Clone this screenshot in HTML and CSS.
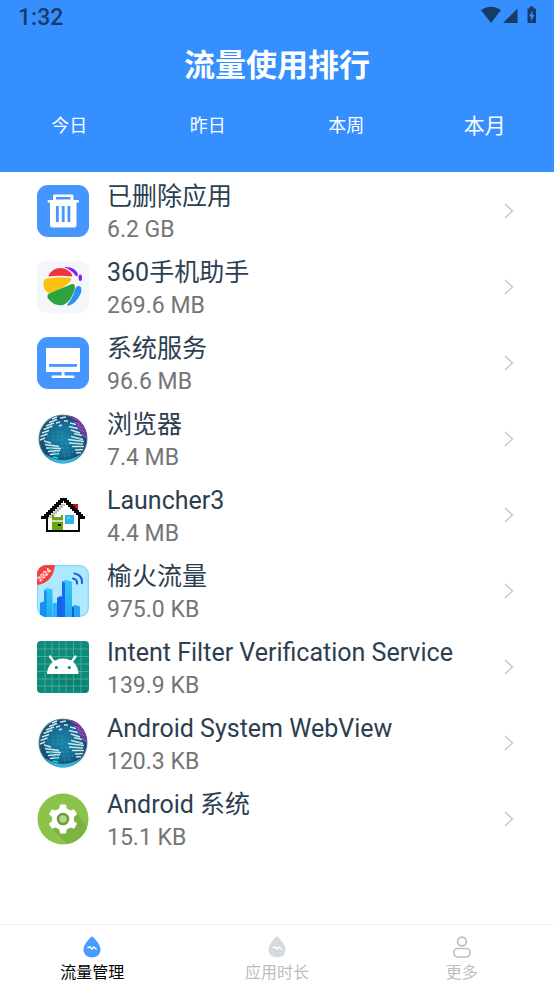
FILE: index.html
```html
<!DOCTYPE html>
<html lang="zh-CN">
<head>
<meta charset="UTF-8" />
<meta name="viewport" content="width=device-width, initial-scale=1" />
<title>流量使用排行</title>
<link rel="stylesheet" href="styles.css">
</head>
<body>

<!-- shared icons -->
<svg class="defs" width="0" height="0" aria-hidden="true">
  <defs>
    <radialGradient id="ocean" cx="50%" cy="50%" r="50%">
      <stop offset="0" stop-color="#1a86aa"/>
      <stop offset="0.65" stop-color="#166c93"/>
      <stop offset="0.92" stop-color="#14496d"/>
      <stop offset="1" stop-color="#6fa3b8"/>
    </radialGradient>
    <linearGradient id="tower" x1="0" y1="0" x2="0" y2="1">
      <stop offset="0" stop-color="#35c5fa"/>
      <stop offset="1" stop-color="#22aaf5"/>
    </linearGradient>
    <clipPath id="round"><rect width="52" height="52" rx="9"/></clipPath>
    <clipPath id="disc"><circle cx="26" cy="26" r="25.500"/></clipPath>
  </defs>
  <symbol id="chevron" viewBox="0 0 10 16">
    <path d="M1 1l7.500 7L1 15" fill="none" stroke="#c4c4c4" stroke-width="1.300"/>
  </symbol>
  <symbol id="globe" viewBox="0 0 52 52">
    <circle cx="26" cy="26" r="24.600" fill="url(#ocean)"/>
    <path d="M8 41Q26 53 44 41Q36 50.500 26 50.500Q16 50.500 8 41Z" fill="#36b4dc"/>
    <path d="M15 23h14M15 27h12M24 31h7M25 35h8M26 39h10M27 43h8M20 19h9" stroke="#3aa3c0" stroke-width="0.800" stroke-dasharray="2 2.500" fill="none"/>
    <g fill="none" stroke="#cfe6ec" stroke-width="1.400">
      <path d="M15 6l5-2M12 9.500l8-3M9 13l8-3M6.500 16.500l9-3.500M5 20l7-2.500M3.500 23.500l7-2.500M3 27l5-2M19 10l4-1M23 5l6-1M27 8l4 0M22 13l3-1"/>
      <path d="M7 28l7 2M8 31.500l14 2M9 35l15 .5M11 38.500l12-1M13 41.500l9-1"/>
      <path d="M33 10l6 1.500M32 13.500l9 2M34 17l9 3M37 20.500l8 2M34 23.500l12 3M31 26.500l16 2M32 30l14 1M35 33.500l12 0M38 37l8-.5M39 40l5-.5"/>
    </g>
    <path d="M16 40l5 1M16 44l5 1M12 35l4 1" stroke="#35d4c8" stroke-width="1.400"/>
    <path d="M35 4.500l6 3M37 9l7 2.500M40 12l7 4M42 16l7 4M45 21l4 3" stroke="#b23cc8" stroke-width="1.800" fill="none"/>
    <path d="M34 3.200Q47 8 49.700 23" stroke="#7d3ba8" stroke-width="1.200" fill="none"/>
  </symbol>
  <symbol id="drop" viewBox="0 0 18 22">
    <path d="M9 0.500C10 0.500 17.500 8 17.500 13.500C17.500 18.500 13.700 21.500 9 21.500S0.500 18.500 0.500 13.500C0.500 8 8 0.500 9 0.500Z" fill="currentColor"/>
    <path d="M5 11.500l2 -.5 1.800 2 2 -2 2.400 2" fill="none" stroke="#fff" stroke-width="1.500" stroke-linecap="round" stroke-linejoin="round"/>
  </symbol>
</svg>

<header>
  <div class="status">
    <span>1:32</span>
    <svg width="56" height="20" viewBox="0 0 56 20" fill="#173b69" aria-hidden="true">
      <path d="M0 4Q10 -2.500 20 4L10 17Z"/>
      <path d="M22 17L36.500 2.500V17Z"/>
      <path d="M46.500 2.500h2V0.500h4v2h2.500v14.500h-8.500Z"/>
      <path d="M51.500 4.500l-3.500 6h2v4.500l3.500-6h-2Z" fill="#368fff"/>
    </svg>
  </div>
  <h1>流量使用排行</h1>
  <div class="tabs">
    <button type="button">今日</button>
    <button type="button">昨日</button>
    <button type="button">本周</button>
    <button type="button" class="active">本月</button>
  </div>
</header>

<main>
  <a class="row" href="#">
    <svg class="icon" viewBox="0 0 52 52">
      <rect width="52" height="52" rx="11" fill="#4596ff"/>
      <path d="M16 15V11q0-1.500 1.500-1.500h17.500q1.500 0 1.500 1.500v4h4.500q1 0 1 1.300t-1 1.300h-1.500V40q0 2.500-2.500 2.500H15.500Q13 42.500 13 40V17.600h-1.500q-1 0-1-1.300t1-1.300Z" fill="#fff"/>
      <path d="M19 12h14.500v2.500H19ZM19 21h2.800v16H19ZM24.800 21h2.800v16h-2.800ZM30.500 21h2.800v16h-2.800Z" fill="#4596ff"/>
    </svg>
    <div class="info"><h2>已删除应用</h2><p>6.2 GB</p></div>
    <svg class="arrow"><use href="#chevron"/></svg>
  </a>
  <a class="row" href="#">
    <svg class="icon" viewBox="0 0 52 52">
      <rect width="52" height="52" rx="9" fill="#f3f6fb"/>
      <path d="M11.300 15.500C14 7.500 24 4.500 31 9.500C34 11.500 36 14 35 15.500Q23 14 11.300 15.500Z" fill="#f0343c"/>
      <path d="M8 18Q20 15 33 17Q36 18 32 22Q24 29 12 32Q9 31.500 7 27Q5.500 21 8 18Z" fill="#fcc010"/>
      <path d="M12 32.500L35 23Q39 22 37.500 29Q34 41 26 44Q17 45.500 11 37.500Q9.500 34 12 32.500Z" fill="#2ca33c"/>
      <path d="M41 25Q45.500 24 44 32Q39 43 31 45Q29 44.500 33 40Q37 34 38 28Q39 25.500 41 25Z" fill="#2c90f4"/>
      <path d="M27 6Q39 5.500 41 14Q40.500 16 38.500 14.500Q34 8.500 27 6Z" fill="#8b1ff0"/>
      <ellipse cx="43.300" cy="16.800" rx="1.700" ry="3.300" fill="#8b1ff0"/>
    </svg>
    <div class="info"><h2>360手机助手</h2><p>269.6 MB</p></div>
    <svg class="arrow"><use href="#chevron"/></svg>
  </a>
  <a class="row" href="#">
    <svg class="icon" viewBox="0 0 52 52">
      <rect width="52" height="52" rx="11" fill="#4596ff"/>
      <rect x="9" y="11" width="34" height="24" rx="1" fill="#fff"/>
      <path d="M12 27h28v2.800H12Z" fill="#4596ff"/>
      <path d="M24.700 35h2.800v3.500h9q1 0 1 1.300t-1 1.300h-21q-1 0-1-1.300t1-1.300h9.200Z" fill="#fff"/>
    </svg>
    <div class="info"><h2>系统服务</h2><p>96.6 MB</p></div>
    <svg class="arrow"><use href="#chevron"/></svg>
  </a>
  <a class="row" href="#">
    <svg class="icon"><use href="#globe"/></svg>
    <div class="info"><h2>浏览器</h2><p>7.4 MB</p></div>
    <svg class="arrow"><use href="#chevron"/></svg>
  </a>
  <a class="row" href="#">
    <svg class="icon" viewBox="0 0 52 52" shape-rendering="crispEdges">
      <path d="M36 15h5v9h-5Z" fill="#d80f12"/>
      <path d="M9 28L26 11L43 28V42H9Z" fill="#fff"/>
      <path d="M11 29v-2h2v-2h2v-2h2v-2h2v-2h2v-2h2v-2h5v2h-2v2h-2v2h-2v2h-2v2h-2v2h-2v2h-4v2Z" fill="#c4c4c4"/>
      <path d="M15 26h2v2h7v-2h2v15H15Z" fill="#6aa70b"/>
      <path d="M15 31h11v2H15Z" fill="#d1d8c5"/>
      <path d="M21 35h3v2h-3Z" fill="#111"/>
      <path d="M28 26h9v9h-9Z" fill="#2fb4e4"/>
      <path d="M30 28h3v2h-3Z" fill="#6dccee"/>
      <path d="M4 28h4v-2h2v-2h2v-2h2v-2h2v-2h2v-2h2v-2h2v-2h2v-2h4v2h2v2h2v2h2v2h2v2h2v2h2v2h2v2h2v2h4" fill="none" stroke="#080808" stroke-width="3"/>
      <path d="M10 28V42H42V28" fill="none" stroke="#080808" stroke-width="2"/>
    </svg>
    <div class="info"><h2>Launcher3</h2><p>4.4 MB</p></div>
    <svg class="arrow"><use href="#chevron"/></svg>
  </a>
  <a class="row" href="#">
    <svg class="icon" viewBox="0 0 52 52">
      <g clip-path="url(#round)">
        <rect width="52" height="52" fill="#8bdcfb"/>
        <rect x="1.500" y="1.500" width="49" height="49" rx="8" fill="#b0e9ff"/>
        <path d="M3 38l3-1.500 4 1.500v14H3Z" fill="#178ff0"/>
        <path d="M7 25l3-2 5.500 1.500V52H7Z" fill="url(#tower)"/>
        <path d="M7 25l2.500 1.500V52H7Z" fill="#168cf0"/>
        <path d="M15.500 39l2-1.500 4 1.500v13h-6Z" fill="#28b5f7"/>
        <path d="M20 33l3-2 3 1v20h-6Z" fill="#1664ee"/>
        <path d="M25 16.500l3.500-1.800 6.500 2V52H25Z" fill="url(#tower)"/>
        <path d="M25 16.500l3 1.500v34h-3Z" fill="#1769f2"/>
        <path d="M35 41.500l3-1.500 5 1.500V52h-8Z" fill="#25a6f6"/>
        <path d="M35 41.500l2 1.500v9h-2Z" fill="#1758ed"/>
        <path d="M37.500 8.500q8 1.500 7.500 9.500M36 13.500q4.500 1 4 5" fill="none" stroke="#1767d5" stroke-width="2.200" stroke-linecap="round"/>
        <path d="M0 0H18Q16 18 0 20Z" fill="#f6403f"/>
        <text class="ribbon" x="3" y="17" transform="rotate(-43 3 17)">2024</text>
      </g>
    </svg>
    <div class="info"><h2>榆火流量</h2><p>975.0 KB</p></div>
    <svg class="arrow"><use href="#chevron"/></svg>
  </a>
  <a class="row" href="#">
    <svg class="icon" viewBox="0 0 52 52">
      <rect width="52" height="52" rx="4" fill="#0b8b78"/>
      <path d="M10.500 33L22 44.500L50 52V42L41 32Z" fill="#087a69" opacity="0.500"/>
      <path d="M8 0V52M15 0V52M22 0V52M29 0V52M36.500 0V52M44 0V52M0 8H52M0 15.500H52M0 23H52M0 30.500H52M0 38H52M0 45H52" stroke="#5fb5a8" stroke-width="0.700"/>
      <path d="M10 33C10 27 14 21 19 19L33 19C38 21 41.500 27 41.500 33Z" fill="#fff"/>
      <path d="M18 19.500Q26 15.500 34 19.500Z" fill="#fff"/>
      <path d="M13 15.500l4 5.500M38.500 15.500l-4 5.500" stroke="#fff" stroke-width="2.200" stroke-linecap="round"/>
      <circle cx="19.300" cy="26.500" r="1.600" fill="#0b8b78"/>
      <circle cx="32.300" cy="26.500" r="1.600" fill="#0b8b78"/>
    </svg>
    <div class="info"><h2>Intent Filter Verification Service</h2><p>139.9 KB</p></div>
    <svg class="arrow"><use href="#chevron"/></svg>
  </a>
  <a class="row" href="#">
    <svg class="icon"><use href="#globe"/></svg>
    <div class="info"><h2>Android System WebView</h2><p>120.3 KB</p></div>
    <svg class="arrow"><use href="#chevron"/></svg>
  </a>
  <a class="row" href="#">
    <svg class="icon" viewBox="0 0 52 52">
      <circle cx="26" cy="26" r="25.500" fill="#8bc34a"/>
      <path d="M14 35L34 55L56 40L37 18Z" fill="#7cb342" clip-path="url(#disc)"/>
      <g fill="#fff">
        <circle cx="26" cy="26" r="11"/>
        <path id="tooth" d="M22 17l1-5.500h6l1 5.500v18l-1 5.500h-6l-1-5.500Z"/>
        <use href="#tooth" transform="rotate(60 26 26)"/>
        <use href="#tooth" transform="rotate(120 26 26)"/>
      </g>
      <circle cx="26" cy="26" r="5" fill="#b5d88c" stroke="#689f38" stroke-width="2.600"/>
    </svg>
    <div class="info"><h2>Android 系统</h2><p>15.1 KB</p></div>
    <svg class="arrow"><use href="#chevron"/></svg>
  </a>
</main>

<nav aria-label="主导航">
  <a href="#" class="active">
    <svg width="18" height="22"><use href="#drop"/></svg>
    流量管理
  </a>
  <a href="#" class="usage">
    <svg width="18" height="22"><use href="#drop"/></svg>
    应用时长
  </a>
  <a href="#">
    <svg width="18" height="22" viewBox="0 0 18 22" fill="none" stroke="#c0c0c0" stroke-width="1.700">
      <circle cx="9" cy="5.500" r="4.400"/>
      <rect x="0.900" y="12.500" width="16.200" height="8.500" rx="4"/>
    </svg>
    更多
  </a>
</nav>

</body>
</html>
```
FILE: styles.css
```css
*, *::before, *::after {
  margin: 0; padding: 0; box-sizing: border-box;
}
body {
  min-height: 100vh;
  display: flex;
  flex-direction: column;
  font-family: Roboto, "Noto Sans CJK SC", sans-serif;
  background: #fff;
  color: #2c3e50;
}
a {
  color: inherit;
  text-decoration: none;
}
.defs {
  position: absolute;
}

header {
  background: #368fff;
  color: #fff;
  padding-bottom: 22px;
}
.status {
  display: flex;
  justify-content: space-between;
  align-items: center;
  height: 34px;
  padding: 0 17px 0 18px;
  font-size: 23px;
  font-weight: 500;
  color: #173b69;
}
.status svg {
  margin-bottom: 2px;
}
h1 {
  font-size: 31px;
  font-weight: 700;
  line-height: 64px;
  text-align: center;
}
.tabs {
  display: grid;
  grid-template-columns: repeat(4, 1fr);
}
.tabs button {
  height: 52px;
  border: none;
  background: none;
  color: #fff;
  font-family: inherit;
  font-size: 18px;
  cursor: pointer;
}
.tabs .active {
  font-size: 21px;
}

main {
  flex: 1;
  padding-top: 1px;
}
.row {
  display: flex;
  align-items: center;
  height: 76px;
  padding: 0 40px 0 37px;
}
.icon {
  width: 52px;
  height: 52px;
  margin-right: 18px;
}
.info {
  flex: 1;
  padding-top: 4px;
}
h2 {
  font-size: 25px;
  font-weight: 400;
  line-height: 33px;
}
.info p {
  font-size: 23px;
  line-height: 33px;
  color: #757575;
}
.arrow {
  width: 10px;
  height: 16px;
}
.ribbon {
  font-size: 7px;
  font-weight: 700;
  fill: #fff;
}

nav {
  display: grid;
  grid-template-columns: repeat(3, 1fr);
  height: 60px;
  border-top: 1px solid #eee;
}
nav a {
  display: flex;
  flex-direction: column;
  align-items: center;
  gap: 3px;
  padding-top: 11px;
  font-size: 16px;
  line-height: 24px;
  color: #bdbdbd;
}
nav .active {
  color: #000;
}
nav .active svg {
  color: #469dff;
}
nav .usage svg {
  color: #d3dae1;
}
```
